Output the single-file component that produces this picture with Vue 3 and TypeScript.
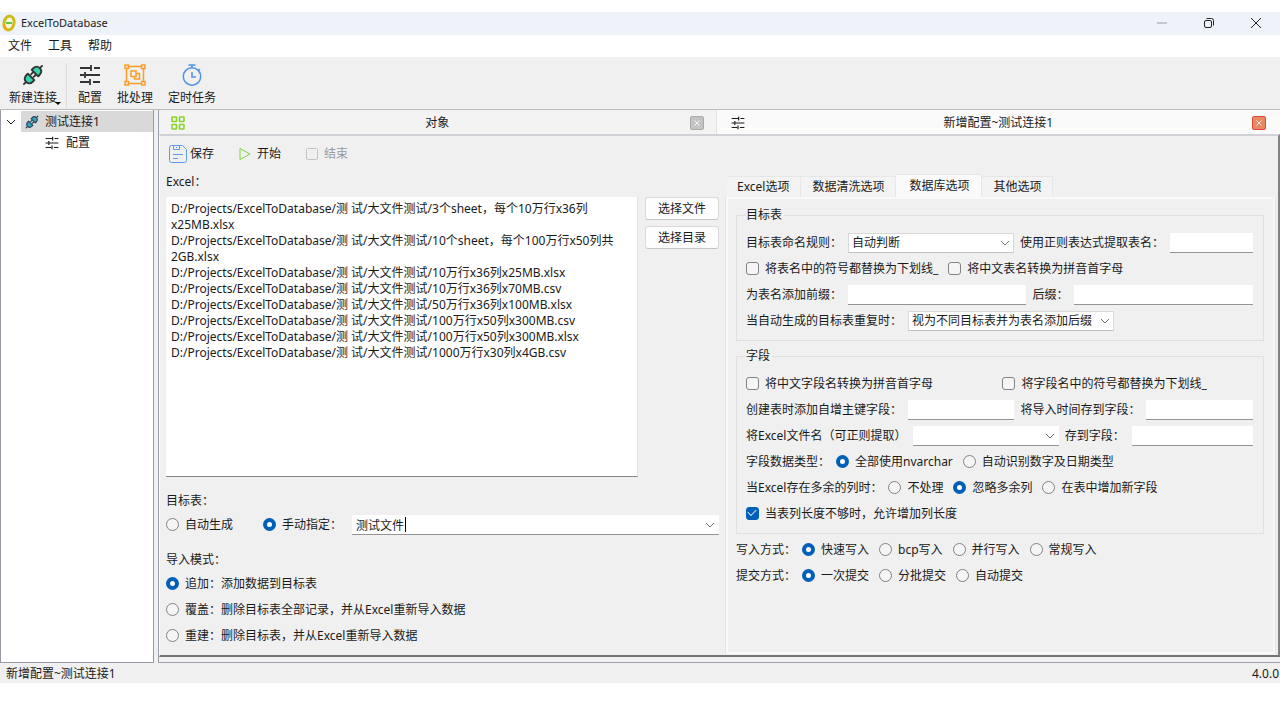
<script setup lang="ts">
import { ref } from 'vue'

interface Choice {
  value: string
  label: string
}

const menus = ['文件', '工具', '帮助']
const optionTabs = ['Excel选项', '数据清洗选项', '数据库选项', '其他选项']
const activeTab = ref('数据库选项')

const files = ref(
  [
    '3个sheet，每个10万行x36列x25MB.xlsx',
    '10个sheet，每个100万行x50列共2GB.xlsx',
    '10万行x36列x25MB.xlsx',
    '10万行x36列x70MB.csv',
    '50万行x36列x100MB.xlsx',
    '100万行x50列x300MB.csv',
    '100万行x50列x300MB.xlsx',
    '1000万行x30列x4GB.csv',
  ]
    .map((name) => 'D:/Projects/ExcelToDatabase/测 试/大文件测试/' + name)
    .join('\n'),
)

const target = ref('manual')
const targetName = ref('测试文件')
const importMode = ref('append')
const importModes: Choice[] = [
  { value: 'append', label: '追加：添加数据到目标表' },
  { value: 'overwrite', label: '覆盖：删除目标表全部记录，并从Excel重新导入数据' },
  { value: 'rebuild', label: '重建：删除目标表，并从Excel重新导入数据' },
]

const dataType = ref('nvarchar')
const dataTypes: Choice[] = [
  { value: 'nvarchar', label: '全部使用nvarchar' },
  { value: 'detect', label: '自动识别数字及日期类型' },
]
const extraColumns = ref('ignore')
const extraChoices: Choice[] = [
  { value: 'none', label: '不处理' },
  { value: 'ignore', label: '忽略多余列' },
  { value: 'add', label: '在表中增加新字段' },
]
const writeMode = ref('fast')
const writeModes: Choice[] = [
  { value: 'fast', label: '快速写入' },
  { value: 'bcp', label: 'bcp写入' },
  { value: 'parallel', label: '并行写入' },
  { value: 'normal', label: '常规写入' },
]
const commitMode = ref('once')
const commitModes: Choice[] = [
  { value: 'once', label: '一次提交' },
  { value: 'batch', label: '分批提交' },
  { value: 'auto', label: '自动提交' },
]
const widen = ref(true)
</script>

<template>
  <div class="screen">
    <svg class="defs" width="0" height="0" aria-hidden="true">
      <symbol id="sliders" viewBox="0 0 22 22">
        <g fill="none" stroke="currentColor" stroke-width="1.800">
          <path d="M1 4H12M15 4H21M1 11H5M6 11H21M1 18H10M14 18H21" />
          <path d="M12 1V7M6 8V14M11 15V21" />
        </g>
      </symbol>
      <symbol id="plug" viewBox="0 0 24 24">
        <g stroke="currentColor" stroke-width="2" stroke-linejoin="round" stroke-linecap="round" transform="rotate(45 12 12)">
          <path d="M12 2V-2M12 22V26M10 10V13M14 10V13" fill="none" />
          <path d="M7 9H17V7Q17 1.500 12 1.500Q7 1.500 7 7Z" fill="var(--plug)" />
          <path d="M7 15H17V17Q17 22.500 12 22.500Q7 22.500 7 17Z" fill="var(--plug)" />
        </g>
      </symbol>
      <symbol id="chevron" viewBox="0 0 10 10">
        <path d="M1 3L5 7L9 3" fill="none" stroke="currentColor" />
      </symbol>
    </svg>

    <div class="window">
      <header class="titlebar">
        <svg class="logo" viewBox="0 0 14 18">
          <ellipse cx="7" cy="9" rx="5" ry="7" transform="rotate(12 7 9)" fill="#f4f7df" stroke="#d0bb1c" stroke-width="3" />
          <path d="M2 10Q2 15 6 16" fill="none" stroke="#f2a900" stroke-width="2" />
          <path d="M4 9H10" stroke="#5cc84b" stroke-width="2" />
        </svg>
        <h1>ExcelToDatabase</h1>
        <div class="controls">
          <button type="button" aria-label="最小化">
            <svg viewBox="0 0 12 12"><path d="M1 6H11" stroke="#999" fill="none" /></svg>
          </button>
          <button type="button" aria-label="还原">
            <svg viewBox="0 0 12 12" fill="none" stroke="#222">
              <rect x="1.500" y="3.500" width="7" height="7" rx="1.500" />
              <path d="M3.500 1.500H8.500Q10.500 1.500 10.500 3.500V8.500" />
            </svg>
          </button>
          <button type="button" aria-label="关闭">
            <svg viewBox="0 0 12 12"><path d="M1 1L11 11M11 1L1 11" stroke="#222" fill="none" /></svg>
          </button>
        </div>
      </header>

      <nav class="menubar">
        <button v-for="menu in menus" :key="menu" type="button">{{ menu }}</button>
      </nav>

      <div class="toolbar">
        <button type="button" class="new">
          <svg class="plug-lg"><use href="#plug" /></svg>
          <span>新建连接</span>
          <i class="drop"></i>
        </button>
        <span class="rule"></span>
        <button type="button">
          <svg class="dark"><use href="#sliders" /></svg>
          <span>配置</span>
        </button>
        <button type="button">
          <svg viewBox="0 0 22 22" fill="none" stroke="#fb9d28" stroke-width="1.500">
            <path d="M4 2.500H18M4 19.500H18M2.500 4V18M19.500 4V18" />
            <rect x="1" y="1" width="3.500" height="3.500" />
            <rect x="17.500" y="1" width="3.500" height="3.500" />
            <rect x="1" y="17.500" width="3.500" height="3.500" />
            <rect x="17.500" y="17.500" width="3.500" height="3.500" />
            <path d="M7 7H12V9.500H15.500V15H10.500V12.500H7ZM12 9.500V12.500H10.500" />
          </svg>
          <span>批处理</span>
        </button>
        <button type="button">
          <svg viewBox="0 0 22 22" fill="none" stroke="#4b93e8" stroke-width="1.500">
            <circle cx="11" cy="12.500" r="8.700" />
            <path d="M7.500 1H14.500M11 1V4M11 8V13H15M17.500 5L19 6.500" />
          </svg>
          <span>定时任务</span>
        </button>
      </div>

      <div class="body">
        <aside class="tree">
          <div class="node root">
            <button type="button" class="expander" aria-label="折叠">
              <svg><use href="#chevron" /></svg>
            </button>
            <a href="#" class="selected">
              <svg class="plug-sm"><use href="#plug" /></svg>
              测试连接1
            </a>
          </div>
          <a href="#" class="node child">
            <svg><use href="#sliders" /></svg>
            配置
          </a>
        </aside>

        <main class="main">
          <div class="doc-tabs">
            <div class="doc-tab objects">
              <svg class="tab-icon" viewBox="0 0 14 14" fill="none" stroke="#88d42e" stroke-width="1.600">
                <rect x="1" y="1" width="4.500" height="4.500" rx=".5" />
                <rect x="8.500" y="1" width="4.500" height="4.500" rx=".5" />
                <rect x="1" y="8.500" width="4.500" height="4.500" rx=".5" />
                <rect x="8.500" y="8.500" width="4.500" height="4.500" rx=".5" />
              </svg>
              <span>对象</span>
              <button type="button" class="close" aria-label="关闭对象">
                <svg viewBox="0 0 14 14"><path d="M4 4L10 10M10 4L4 10" stroke="#fff" /></svg>
              </button>
            </div>
            <div class="doc-tab config">
              <svg class="tab-icon"><use href="#sliders" /></svg>
              <span>新增配置~测试连接1</span>
              <button type="button" class="close hot" aria-label="关闭新增配置">
                <svg viewBox="0 0 14 14"><path d="M4 4L10 10M10 4L4 10" stroke="#fff" /></svg>
              </button>
            </div>
          </div>

          <div class="pane">
            <section class="left">
              <div class="actions">
                <button type="button">
                  <svg class="save" viewBox="0 0 18 18" fill="none" stroke="#5b9cf0">
                    <path d="M2.500 .5H13.500L17.500 4.500V15.500Q17.500 17.500 15.500 17.500H2.500Q.5 17.500 .5 15.500V2.500Q.5 .5 2.500 .5Z" />
                    <path d="M4.500 .5V4.500H10.500V.5M7.500 2V3M4 9.500H14M4 13.500H9" />
                  </svg>
                  保存
                </button>
                <button type="button">
                  <svg viewBox="0 0 14 14"><path d="M2 1.500L12 7L2 12.500Z" fill="none" stroke="#7fd43f" /></svg>
                  开始
                </button>
                <button type="button" disabled>
                  <svg viewBox="0 0 14 14"><rect x="1.500" y="1.500" width="11" height="11" rx="1" fill="none" stroke="#c4c4c4" /></svg>
                  结束
                </button>
              </div>

              <label class="caption first" for="files">Excel：</label>
              <div class="file-area">
                <textarea id="files" v-model="files" spellcheck="false"></textarea>
                <div class="file-buttons">
                  <button type="button">选择文件</button>
                  <button type="button">选择目录</button>
                </div>
              </div>

              <div class="caption target">目标表：</div>
              <div class="target-row">
                <label class="choice"><input v-model="target" type="radio" name="target" value="auto" />自动生成</label>
                <label class="choice"><input v-model="target" type="radio" name="target" value="manual" />手动指定：</label>
                <div class="combo">
                  <input v-model="targetName" class="field" type="text" aria-label="目标表名称" />
                  <i class="caret"></i>
                  <svg><use href="#chevron" /></svg>
                </div>
              </div>

              <div class="caption mode">导入模式：</div>
              <div v-for="item in importModes" :key="item.value" class="row">
                <label class="choice">
                  <input v-model="importMode" type="radio" name="mode" :value="item.value" />{{ item.label }}
                </label>
              </div>
            </section>

            <section class="right">
              <div class="option-tabs" role="tablist">
                <button
                  v-for="tab in optionTabs"
                  :key="tab"
                  type="button"
                  role="tab"
                  :aria-selected="tab === activeTab"
                  :class="{ active: tab === activeTab }"
                  @click="activeTab = tab"
                >{{ tab }}</button>
              </div>

              <div class="option-panel">
                <fieldset>
                  <legend>目标表</legend>
                  <div class="row naming">
                    <label for="rule">目标表命名规则：</label>
                    <div class="combo boxed">
                      <select id="rule" class="field"><option>自动判断</option></select>
                      <svg><use href="#chevron" /></svg>
                    </div>
                    <label class="second" for="regex">使用正则表达式提取表名：</label>
                    <input id="regex" class="field" type="text" />
                  </div>
                  <div class="row inline">
                    <label class="choice"><input type="checkbox" />将表名中的符号都替换为下划线_</label>
                    <label class="choice"><input type="checkbox" />将中文表名转换为拼音首字母</label>
                  </div>
                  <div class="row affix">
                    <label for="prefix">为表名添加前缀：</label>
                    <input id="prefix" class="field" type="text" />
                    <label class="second" for="suffix">后缀：</label>
                    <input id="suffix" class="field" type="text" />
                  </div>
                  <div class="row repeat">
                    <label for="dup">当自动生成的目标表重复时：</label>
                    <div class="combo boxed">
                      <select id="dup" class="field"><option>视为不同目标表并为表名添加后缀</option></select>
                      <svg><use href="#chevron" /></svg>
                    </div>
                  </div>
                </fieldset>

                <fieldset>
                  <legend>字段</legend>
                  <div class="row halves">
                    <label class="choice"><input type="checkbox" />将中文字段名转换为拼音首字母</label>
                    <label class="choice"><input type="checkbox" />将字段名中的符号都替换为下划线_</label>
                  </div>
                  <div class="row keys">
                    <label for="pk">创建表时添加自增主键字段：</label>
                    <input id="pk" class="field" type="text" />
                    <label class="second" for="time">将导入时间存到字段：</label>
                    <input id="time" class="field" type="text" />
                  </div>
                  <div class="row source">
                    <label for="fname">将Excel文件名（可正则提取）</label>
                    <div class="combo">
                      <input id="fname" class="field" type="text" />
                      <svg><use href="#chevron" /></svg>
                    </div>
                    <label class="second" for="store">存到字段：</label>
                    <input id="store" class="field" type="text" />
                  </div>
                  <div class="row radios">
                    <span>字段数据类型：</span>
                    <label v-for="item in dataTypes" :key="item.value" class="choice">
                      <input v-model="dataType" type="radio" name="dtype" :value="item.value" />{{ item.label }}
                    </label>
                  </div>
                  <div class="row radios">
                    <span>当Excel存在多余的列时：</span>
                    <label v-for="item in extraChoices" :key="item.value" class="choice">
                      <input v-model="extraColumns" type="radio" name="extra" :value="item.value" />{{ item.label }}
                    </label>
                  </div>
                  <div class="row">
                    <label class="choice"><input v-model="widen" type="checkbox" />当表列长度不够时，允许增加列长度</label>
                  </div>
                </fieldset>

                <div class="row radios">
                  <span>写入方式：</span>
                  <label v-for="item in writeModes" :key="item.value" class="choice">
                    <input v-model="writeMode" type="radio" name="write" :value="item.value" />{{ item.label }}
                  </label>
                </div>
                <div class="row radios">
                  <span>提交方式：</span>
                  <label v-for="item in commitModes" :key="item.value" class="choice">
                    <input v-model="commitMode" type="radio" name="commit" :value="item.value" />{{ item.label }}
                  </label>
                </div>
              </div>
            </section>
          </div>
        </main>
      </div>

      <footer class="status">
        <span>新增配置~测试连接1</span>
        <span>4.0.0</span>
      </footer>
    </div>
  </div>
</template>

<style>
body {
  margin: 0;
  background: #fff;
}
</style>

<style scoped>
* {
  box-sizing: border-box;
}
.screen {
  min-height: 100vh;
  padding: 12px 0 37px;
  display: flex;
  font: 12px/16px "Noto Sans", "Noto Sans CJK SC", sans-serif;
  color: #1a1a1a;
  white-space: nowrap;
}
.defs {
  position: absolute;
}
button,
input,
select,
textarea {
  margin: 0;
  padding: 0;
  border: 0;
  border-radius: 0;
  background: none;
  font: inherit;
  color: inherit;
}
a {
  color: inherit;
  text-decoration: none;
}
.window {
  flex: 1;
  min-width: 0;
  display: flex;
  flex-direction: column;
  background: #f0f0f0;
}

.titlebar {
  height: 23px;
  display: flex;
  align-items: center;
  padding: 0 1px 1px 2px;
  background: #eef3fa;
}
.logo {
  width: 14px;
  height: 18px;
  margin-right: 5px;
}
h1 {
  margin: 0;
  font-size: 11px;
  font-weight: 400;
}
.controls {
  display: flex;
  margin-left: auto;
}
.controls button {
  width: 47px;
  height: 22px;
  display: grid;
  place-items: center;
}
.controls svg {
  width: 12px;
  height: 12px;
}

.menubar {
  height: 22px;
  display: flex;
  gap: 16px;
  padding-left: 8px;
  background: #fff;
}

.toolbar {
  height: 53px;
  display: flex;
  gap: 15px;
  padding: 6px 9px 0;
  border-bottom: 1px solid #bcbcbc;
}
.toolbar button {
  display: flex;
  flex-direction: column;
  align-items: center;
  gap: 4px;
  padding-top: 1px;
}
.toolbar svg {
  width: 22px;
  height: 22px;
}
.toolbar .plug-lg {
  color: #333;
  --plug: #34d3ae;
}
.dark {
  color: #333;
}
.new {
  position: relative;
  margin-right: -6px;
}
.drop {
  position: absolute;
  right: -4px;
  bottom: 4px;
  border: 3px solid transparent;
  border-top-color: #000;
  border-bottom: 0;
}
.rule {
  width: 1px;
  height: 45px;
  margin-right: -4px;
  background: #dcdcdc;
}

.body {
  flex: 1;
  min-height: 0;
  display: flex;
  gap: 4px;
}
.tree {
  width: 154px;
  flex: none;
  padding-top: 1px;
  border: 1px solid #989ba3;
  border-top: 0;
  background: #fff;
}
.node {
  height: 21px;
  display: flex;
  align-items: center;
}
.expander {
  width: 20px;
  height: 21px;
  display: grid;
  place-items: center;
}
.expander svg {
  width: 10px;
  height: 10px;
}
.selected {
  flex: 1;
  height: 21px;
  display: flex;
  align-items: center;
  gap: 6px;
  padding-left: 4px;
  background: #d9d9d9;
}
.plug-sm {
  width: 14px;
  height: 14px;
  color: #2c4257;
  --plug: #28a9c0;
}
.child {
  gap: 6px;
  padding-left: 43px;
}
.child svg {
  width: 16px;
  height: 14px;
}

.main {
  flex: 1;
  min-width: 0;
  display: flex;
  flex-direction: column;
  padding-bottom: 5px;
  border: 1px solid #9aa0a8;
  border-top: 0;
  border-right: 0;
}
.doc-tabs {
  height: 24px;
  flex: none;
  display: flex;
}
.doc-tab {
  flex: 559;
  display: flex;
  align-items: center;
  padding: 2px 12px 0;
  background: #f3f3f3;
  border-right: 1px solid #e2e2e2;
}
.doc-tab.config {
  flex: 562;
  padding: 1px 14px 0;
  border-right: 0;
  background: #fafafa;
}
.doc-tab span {
  flex: 1;
  text-align: center;
}
.tab-icon {
  width: 14px;
  height: 14px;
}
.close {
  width: 14px;
  height: 14px;
  border: 1px solid #a9a9a9;
  border-radius: 2px;
  background: #c4c4c4;
  display: grid;
}
.close svg {
  width: 12px;
  height: 12px;
}
.close.hot {
  border-color: #e0483e;
  background: #e98963;
}

.pane {
  flex: 1;
  min-height: 0;
  display: flex;
  border-top: 2px solid #d2d2d6;
  border-left: 1px solid #fafafa;
  border-right: 2px solid #808086;
  border-bottom: 2px solid #747474;
}
.left {
  flex: 561;
  min-width: 0;
  padding: 0 0 0 6px;
  display: flex;
  flex-direction: column;
}
.actions {
  height: 36px;
  display: flex;
  align-items: center;
  gap: 24px;
  padding-left: 3px;
}
.actions button {
  display: flex;
  align-items: center;
  gap: 5px;
}
.actions svg {
  width: 14px;
  height: 14px;
}
.actions .save {
  width: 18px;
  height: 18px;
  margin-right: -2px;
}
.actions button:disabled {
  color: #9a9a9a;
}
.caption {
  height: 20px;
  line-height: 20px;
}
.caption.first {
  margin-bottom: 5px;
}
.file-area {
  flex: 1;
  min-height: 0;
  display: flex;
  gap: 7px;
}
textarea {
  flex: 1;
  min-width: 0;
  padding: 4px 5px;
  resize: none;
  outline: none;
  background: #fff;
  border-right: 1px solid #e3e3e3;
  border-bottom: 1px solid #858585;
}
.file-buttons {
  width: 74px;
  margin-right: 7px;
  display: flex;
  flex-direction: column;
  gap: 6px;
}
.file-buttons button {
  height: 23px;
  border: 1px solid #dadada;
  border-bottom-color: #c4c4c4;
  border-radius: 3px;
  background: #fdfdfd;
}
.caption.target {
  margin-top: 14px;
}
.target-row {
  height: 28px;
  display: flex;
  align-items: center;
  gap: 30px;
}
.target-row .combo {
  flex: 1;
  margin: 0 7px 0 -20px;
}
.caption.mode {
  margin-top: 11px;
}
.caption.mode + .row {
  margin-top: 1px;
}
.left > .row:last-child {
  margin-bottom: 6px;
}

.choice {
  display: flex;
  align-items: center;
  gap: 6px;
}
.choice input {
  appearance: none;
  width: 13px;
  height: 13px;
  flex: none;
  margin-bottom: 2px;
  border: 1px solid #838383;
  background: #f5f5f5;
}
.choice input[type='radio'] {
  border-radius: 50%;
}
.choice input[type='radio']:checked {
  border: 4px solid #005fb8;
  background: #fff;
}
.choice input[type='checkbox'] {
  border-radius: 3px;
  display: grid;
  place-items: center;
}
.choice input[type='checkbox']:checked {
  border-color: #005fb8;
  background: #005fb8;
}
.choice input[type='checkbox']:checked::after {
  content: '';
  width: 7px;
  height: 4px;
  margin-bottom: 3px;
  border: solid #cfe2f5;
  border-width: 0 0 1px 1px;
  transform: rotate(-45deg);
}

.field {
  width: 100%;
  min-width: 0;
  height: 20px;
  padding: 0 4px;
  outline: none;
  background: #fff;
  border-bottom: 1px solid #949494;
}
.combo {
  position: relative;
  min-width: 0;
  display: flex;
}
.combo svg {
  position: absolute;
  right: 4px;
  top: 5px;
  width: 10px;
  height: 10px;
  color: #777;
  pointer-events: none;
}
select.field {
  appearance: none;
  padding: 0 18px 0 3px;
  border: 1px solid #d9d9d9;
  border-bottom-color: #c2c2c2;
}
.caret {
  position: absolute;
  left: 53px;
  top: 2px;
  width: 1px;
  height: 15px;
  background: #000;
}

.right {
  flex: 550;
  min-width: 0;
  padding: 38px 3px 1px 0;
  display: flex;
  flex-direction: column;
}
.option-tabs {
  height: 23px;
  flex: none;
  display: flex;
  align-items: flex-end;
  padding-left: 1px;
}
.option-tabs button {
  height: 21px;
  padding: 0 11px;
  border: 1px solid #e6e6e6;
  border-left: 0;
  border-bottom: 0;
  background: #f3f3f3;
}
.option-tabs button:first-child {
  padding-left: 10px;
}
.option-tabs button.active {
  height: 23px;
  padding: 0 12px 0 13px;
  background: #fafafa;
}
.option-panel {
  flex: 1;
  padding: 8px 9px 7px 8px;
  border: 2px solid #f9f9f9;
  box-shadow: -1px 0 #e3e3e3, 1px 0 #e3e3e3;
}
fieldset {
  min-width: 0;
  margin: 0 0 7px;
  padding: 7px 10px 6px 9px;
  border: 1px solid #e0e0e0;
}
fieldset + .row {
  margin-top: -4px;
}
legend {
  margin: 0;
  padding: 0 2px 0 0;
}
.row {
  height: 26px;
  display: grid;
  align-items: center;
}
.second {
  padding-left: 6px;
}
.naming {
  grid-template-columns: 102px 2fr 156px 1fr;
}
.affix {
  grid-template-columns: 102px 1fr 48px 1fr;
}
.repeat {
  grid-template-columns: 162px 206px;
}
.halves {
  grid-template-columns: 1fr 1fr;
  column-gap: 6px;
}
.keys {
  grid-template-columns: 162px 1fr 132px 1fr;
}
.source {
  grid-template-columns: 167px 6fr 73px 5fr;
}
.inline,
.radios {
  display: flex;
  gap: 10px;
}
.radios span {
  margin-right: -4px;
}

.status {
  height: 20px;
  flex: none;
  display: flex;
  align-items: center;
  justify-content: space-between;
  padding: 2px 1px 0 6px;
}
</style>
